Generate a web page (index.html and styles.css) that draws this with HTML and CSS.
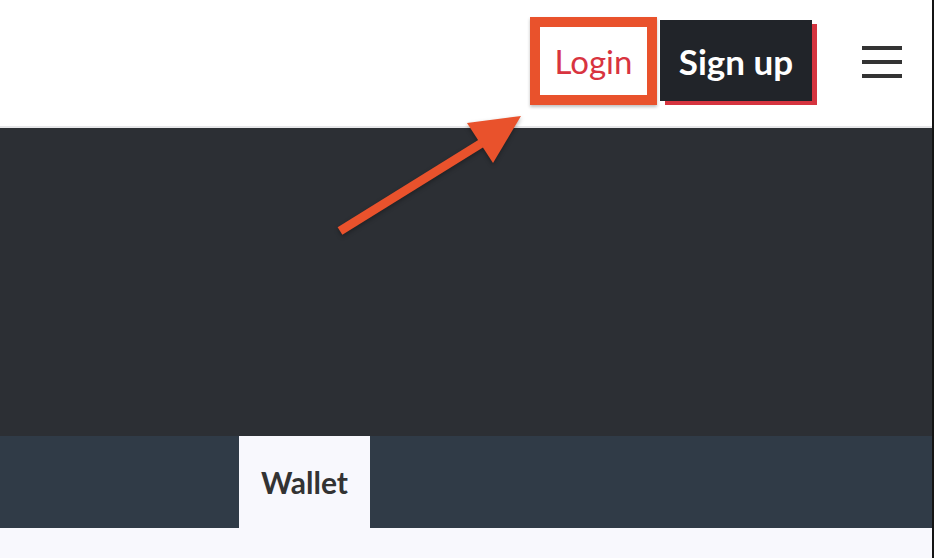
FILE: index.html
```html
<!DOCTYPE html>
<html lang="en">
<head>
    <meta charset="UTF-8">
    <meta name="viewport" content="width=device-width, initial-scale=1.0">
    <title>Wallet</title>
    <link rel="stylesheet" href="styles.css">
</head>
<body>
    <header class="topbar">
        <a href="#" class="login">Login</a>
        <a href="#" class="signup">Sign up</a>
        <button class="menu" aria-label="Menu">
            <span></span>
            <span></span>
            <span></span>
        </button>
    </header>

    <div class="hero"></div>

    <nav class="tabs">
        <a href="#" class="tab active">Wallet</a>
    </nav>

    <main class="content"></main>

    <!-- pointer to the login link -->
    <svg class="pointer" width="200" height="130" viewBox="0 0 200 130">
        <line x1="20" y1="115" x2="165" y2="25" stroke="#e9522c" stroke-width="9" />
        <polygon points="147,7 201,0 173,47" fill="#e9522c" />
    </svg>
</body>
</html>
```

FILE: styles.css
```css
body {
    font-family: "Lato", "Noto Sans", sans-serif;
    margin: 0;
    padding: 0;
    background-color: #f8f8fd;
    border-right: 2px solid #141414;
    min-height: 100vh;
    box-sizing: border-box;
}
a {
    text-decoration: none;
}
.topbar {
    display: flex;
    align-items: flex-start;
    justify-content: flex-end;
    height: 126px;
    padding-right: 30px;
    background-color: #fff;
    border-bottom: 2px solid #e6e6e8;
}
.login {
    display: flex;
    align-items: center;
    justify-content: center;
    width: 107px;
    height: 68px;
    margin-top: 17px;
    border: 10px solid #e9522c;
    color: #d8343f;
    font-size: 33px;
    box-shadow: 0 2px 3px rgba(0, 0, 0, 0.25);
}
.signup {
    display: flex;
    align-items: center;
    justify-content: center;
    width: 152px;
    height: 81px;
    margin-top: 20px;
    margin-left: 3px;
    background-color: #212429;
    color: #fff;
    font-size: 35px;
    font-weight: bold;
    box-shadow: 5px 4px 0 #d5343f;
}
.menu {
    display: flex;
    flex-direction: column;
    gap: 10px;
    margin-top: 46px;
    margin-left: 50px;
    padding: 0;
    border: none;
    background: none;
    cursor: pointer;
}
.menu span {
    display: block;
    width: 40px;
    height: 4px;
    background-color: #333;
}
.hero {
    height: 308px;
    background-color: #2c2f34;
}
.tabs {
    display: flex;
    height: 92px;
    padding-left: 239px;
    background-color: #303b47;
}
.tab {
    display: flex;
    align-items: center;
    justify-content: center;
    width: 131px;
    color: #333;
    font-size: 30px;
    font-weight: bold;
}
.tab.active {
    background-color: #f8f8fd;
}
.pointer {
    position: absolute;
    left: 320px;
    top: 116px;
    overflow: visible;
    filter: drop-shadow(0 2px 2px rgba(0, 0, 0, 0.3));
}
```
